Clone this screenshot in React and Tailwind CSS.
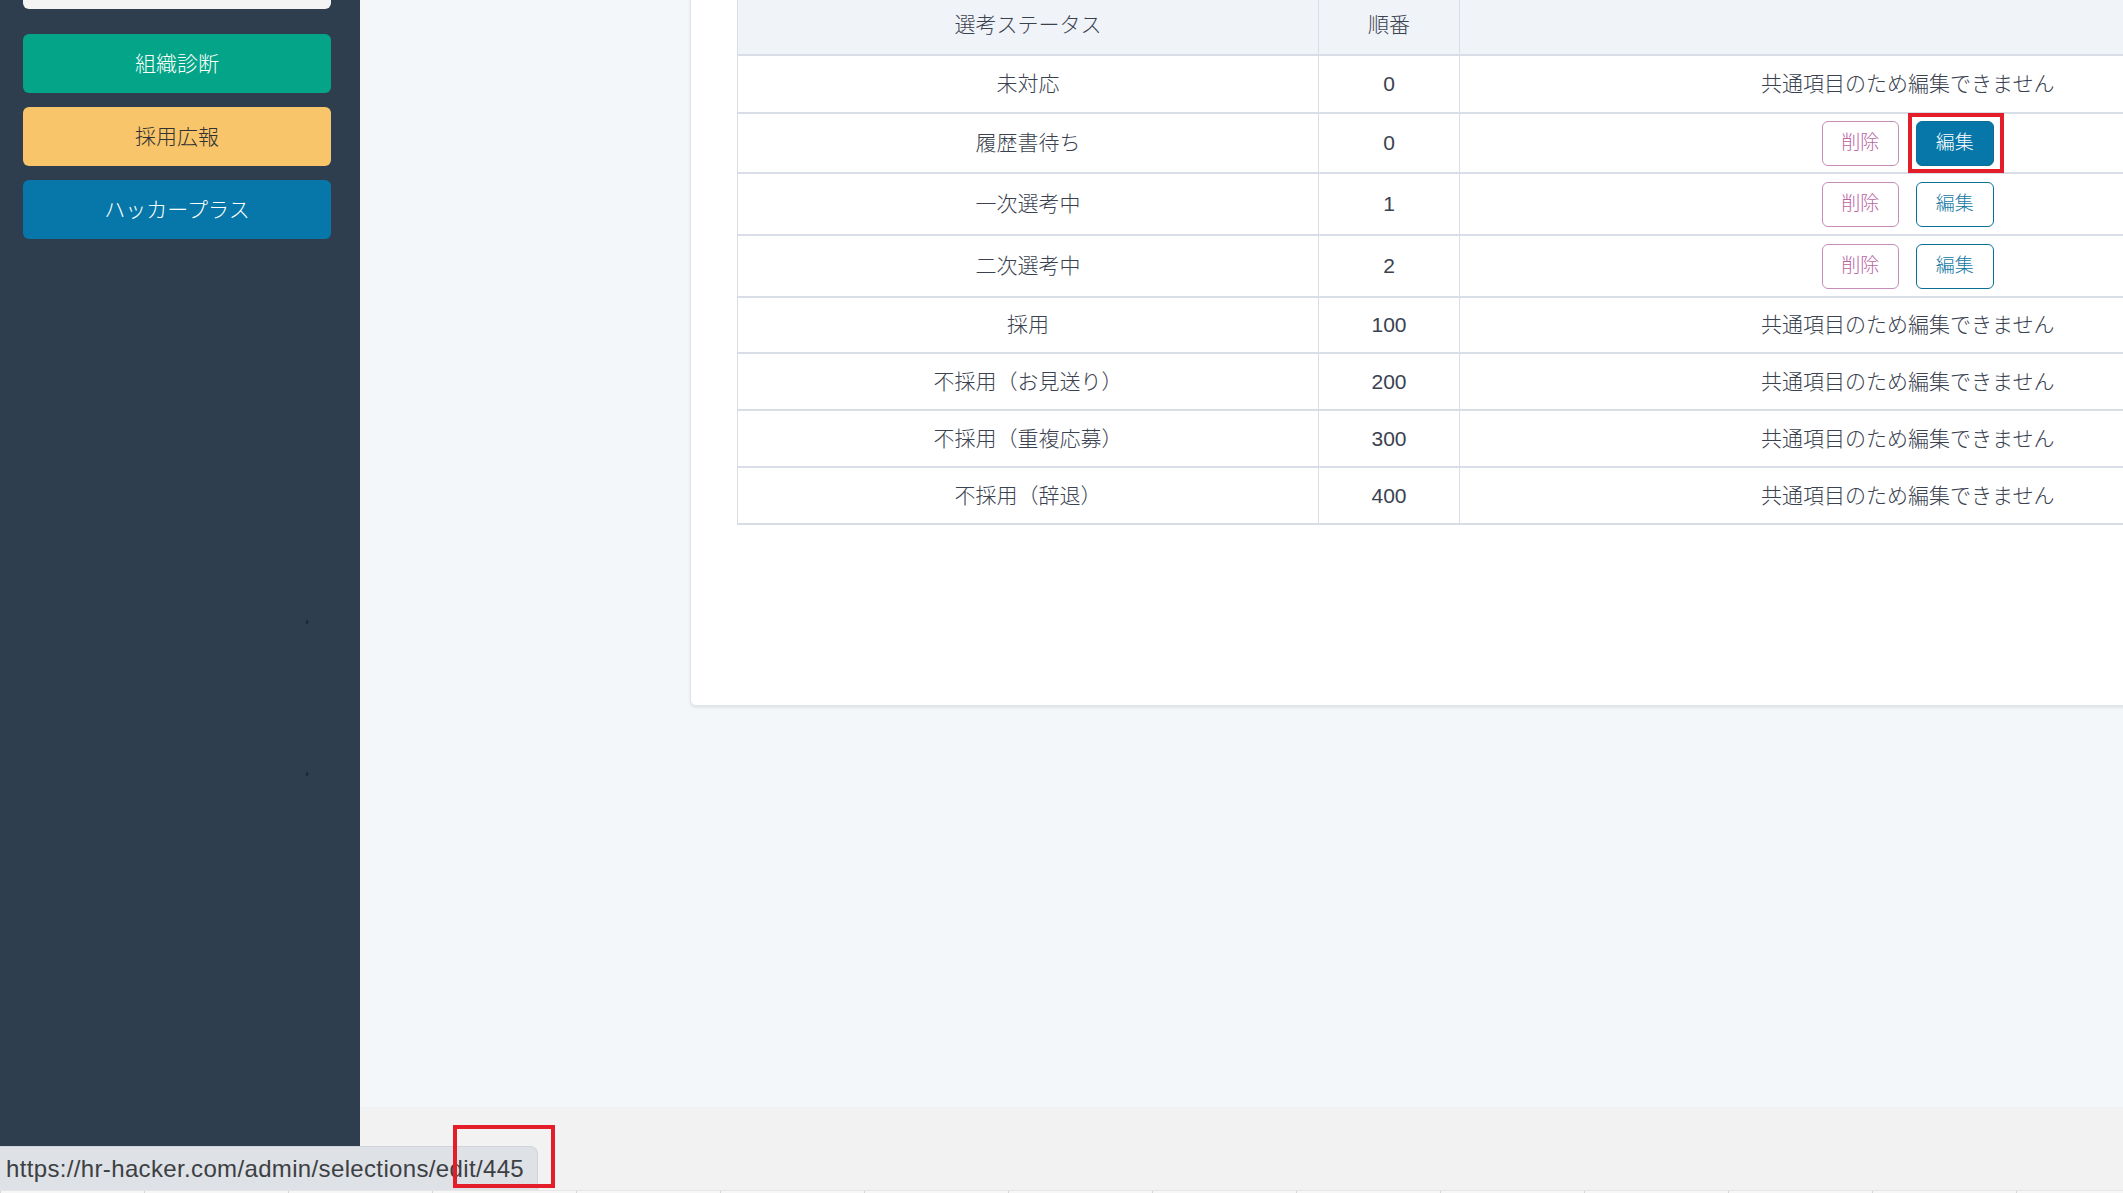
import React from "react";

const rows = [
  { name: "未対応", order: "0", editable: false, h: "h-[58px]" },
  { name: "履歴書待ち", order: "0", editable: true, marked: true, h: "h-[60px]" },
  { name: "一次選考中", order: "1", editable: true, h: "h-[62px]" },
  { name: "二次選考中", order: "2", editable: true, h: "h-[62px]" },
  { name: "採用", order: "100", editable: false, h: "h-[56px]" },
  { name: "不採用（お見送り）", order: "200", editable: false, h: "h-[57px]" },
  { name: "不採用（重複応募）", order: "300", editable: false, h: "h-[57px]" },
  { name: "不採用（辞退）", order: "400", editable: false, h: "h-[57px]" },
];

const SideButton = ({ className, children }) => (
  <button className={`h-[59px] w-full rounded-[6px] text-[21px] font-light ${className}`}>{children}</button>
);

const App = () => {
  return (
    <div className="relative flex h-[1193px] w-[2123px] overflow-hidden bg-[#f2f2f2] font-['Liberation_Sans','Noto_Sans_CJK_JP',sans-serif] text-[#3a4250]">
      {/* sidebar */}
      <aside className="relative flex w-[360px] shrink-0 flex-col gap-[14px] bg-[#2f3e4f] pl-[23px] pr-[29px]">
        <div className="mb-[11px] h-[9px] w-full rounded-b-[6px] bg-[#f4f4f5]"></div>
        <SideButton className="bg-[#03a487] text-white">組織診断</SideButton>
        <SideButton className="bg-[#f8c56b] text-[#333]">採用広報</SideButton>
        <SideButton className="bg-[#0677a8] text-white">ハッカープラス</SideButton>
        <span className="absolute left-[306px] top-[619px] h-0 w-0 border-y-[3px] border-l-[3px] border-y-transparent border-l-[#1d2833]"></span>
        <span className="absolute left-[306px] top-[771px] h-0 w-0 border-y-[3px] border-l-[3px] border-y-transparent border-l-[#1d2833]"></span>
      </aside>

      <div className="flex min-w-0 flex-1 flex-col">
        <main className="h-[1107px] overflow-hidden bg-[#f4f7fa] pl-[330px]">
          <div className="-mt-[40px] w-[1800px] rounded-b-[6px] border border-[#e1e5ea] bg-white pb-[180px] pl-[46px] pt-[35px] shadow-[0_2px_3px_rgba(0,0,0,0.08)]">
            <table className="border-collapse text-[21px] font-light">
              <thead>
                <tr className="h-[59px] bg-[#f0f3f8]">
                  <th className="w-[581px] border-b-2 border-l border-[#d9dee6] font-light">選考ステータス</th>
                  <th className="w-[141px] border-b-2 border-l border-[#d9dee6] font-light">順番</th>
                  <th className="w-[896px] border-b-2 border-l border-[#d9dee6] font-light"></th>
                </tr>
              </thead>
              <tbody>
                {rows.map((r) => (
                  <tr key={r.name} className={r.h}>
                    <td className="border-b-2 border-l border-[#d9dee6] text-center">{r.name}</td>
                    <td className="border-b-2 border-l border-[#d9dee6] text-center">{r.order}</td>
                    <td className="border-b-2 border-l border-[#d9dee6] text-center">
                      {r.editable ? (
                        <div className="flex items-center justify-center gap-[17px]">
                          <button className="h-[45px] w-[77px] rounded-[6px] border border-[#c58db8] text-[19px] text-[#b9639f]">削除</button>
                          <span className="relative">
                            <button
                              className={`h-[45px] w-[78px] rounded-[6px] border border-[#0b6f96] text-[19px] ${r.marked ? "bg-[#0677a8] text-white" : "text-[#1478a3]"}`}
                            >
                              編集
                            </button>
                            {r.marked && (
                              <span className="pointer-events-none absolute -bottom-[7px] -left-[8px] -right-[10px] -top-[8px] border-4 border-[#e31e2a]"></span>
                            )}
                          </span>
                        </div>
                      ) : (
                        "共通項目のため編集できません"
                      )}
                    </td>
                  </tr>
                ))}
              </tbody>
            </table>
          </div>
        </main>
        <div className="flex-1 bg-[#f2f2f2]"></div>
      </div>

      {/* bottom strip */}
      <div className="absolute bottom-0 left-0 right-0 flex h-[3px] border-t border-[#e6e6e6] bg-[#f7f7f7]">
        {Array.from({ length: 15 }).map((_, i) => (
          <div key={i} className="w-[144px] shrink-0 border-l border-[#d6d6d6]"></div>
        ))}
      </div>

      {/* browser status bar */}
      <div className="absolute bottom-[3px] left-0 flex h-[44px] w-[538px] items-center rounded-tr-[8px] border-r border-t border-[#d0d3d8] bg-[#dee1e6] pl-[6px] text-[24px] tracking-[0.35px] text-[#3c4043]">
        https://hr-hacker.com/admin/selections/edit/445
      </div>
      <div className="absolute left-[453px] top-[1125px] h-[63px] w-[102px] border-4 border-[#e31e2a]"></div>
    </div>
  );
};

export default App;
